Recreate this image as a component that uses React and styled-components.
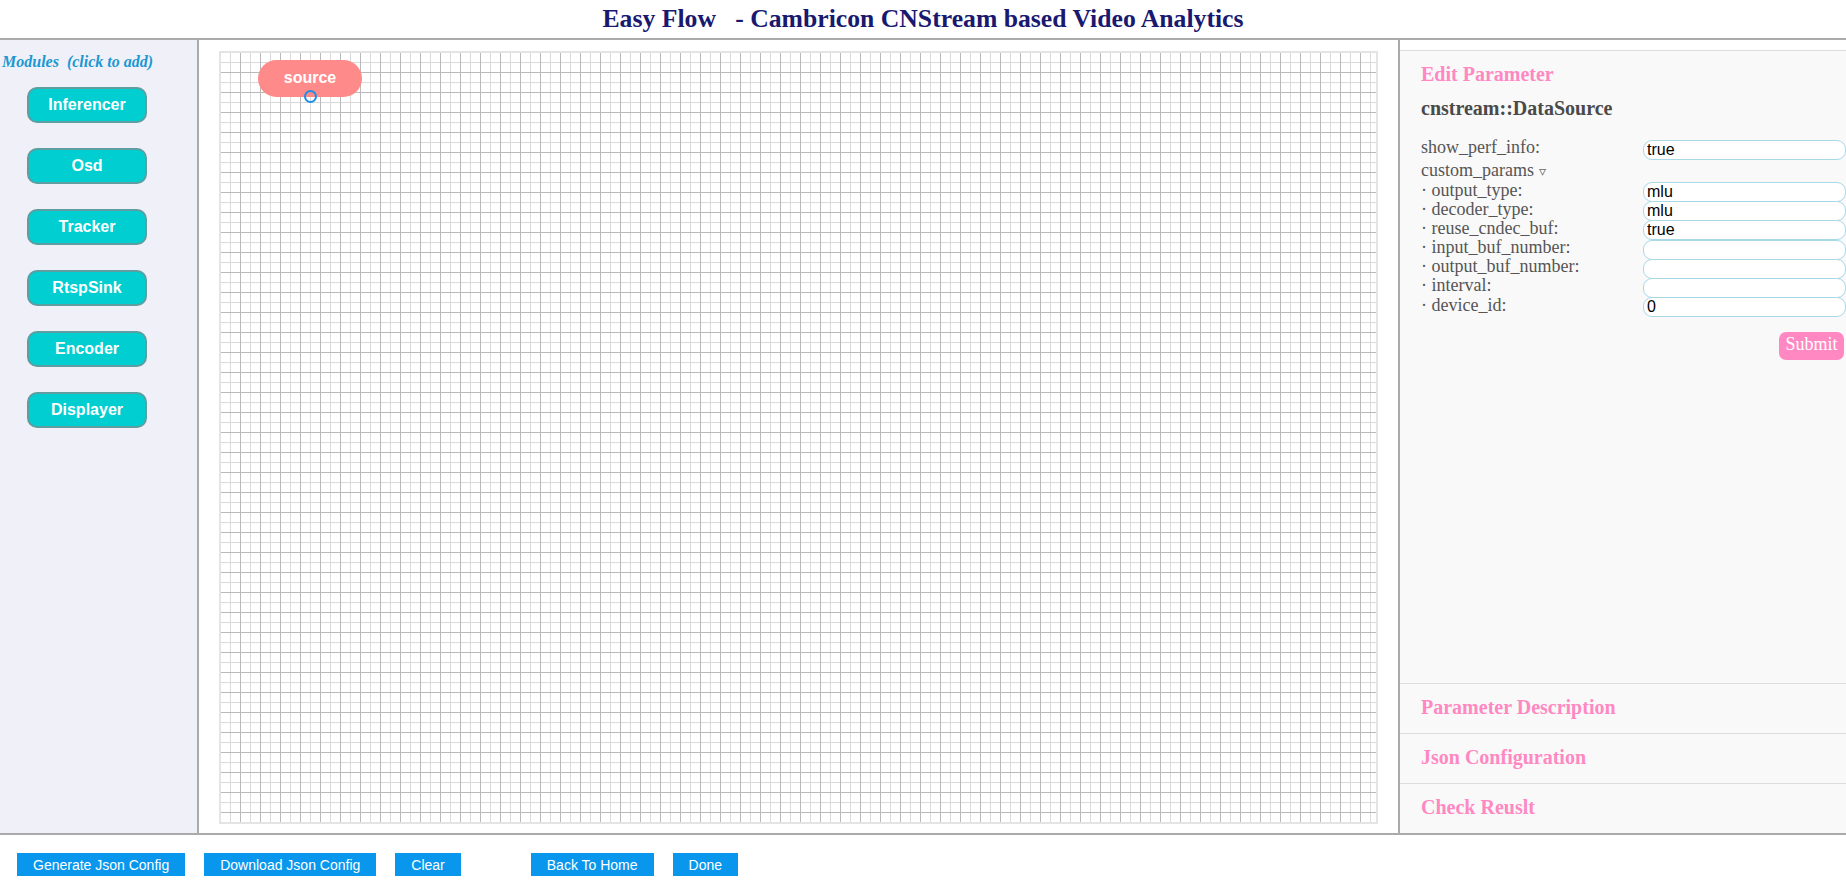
import React from "react";
import styled, { createGlobalStyle } from "styled-components";

const GlobalStyle = createGlobalStyle`
  html, body {
    margin: 0;
    padding: 0;
    overflow: hidden;
  }
  body {
    font-family: "Liberation Serif", serif;
  }
`;

const Page = styled.div`
  display: flex;
  flex-direction: column;
  width: 1846px;
  height: 889px;
  background: #fff;
`;

const Header = styled.header`
  height: 38px;
  border-bottom: 2px solid #aaa;
  display: flex;
  justify-content: center;
  align-items: center;
`;

const Title = styled.h1`
  margin: 0;
  font-family: "Liberation Serif", serif;
  font-weight: bold;
  font-size: 25.7px;
  color: #191970;
  white-space: pre;
`;

const Main = styled.div`
  flex: 1;
  display: flex;
  border-bottom: 2px solid #aaa;
  min-height: 0;
`;

const Sidebar = styled.aside`
  width: 197px;
  border-right: 2px solid #aaa;
  background: #f0f0f8;
  display: flex;
  flex-direction: column;
  padding: 12px 0 0 0;
`;

const SidebarTitle = styled.div`
  font-family: "Liberation Serif", serif;
  font-style: italic;
  font-weight: bold;
  font-size: 16px;
  line-height: 20px;
  color: #1a98d2;
  padding-left: 2px;
  white-space: pre;
  margin-bottom: 15px;
`;

const ModuleButton = styled.button`
  width: 120px;
  height: 36px;
  margin: 0 0 25px 27px;
  background: #00ced1;
  border: 2px solid #5f9ea0;
  border-radius: 10px;
  color: #fff;
  font-family: "Liberation Sans", Arial, sans-serif;
  font-weight: bold;
  font-size: 16px;
  padding: 0;
`;

const CanvasArea = styled.div`
  flex: 1;
  padding: 11px 20px 9px 20px;
  display: flex;
`;

const Canvas = styled.div`
  flex: 1;
  position: relative;
  border: 2px solid #e4e4e4;
  background-color: #fff;
  background-image:
    linear-gradient(to right, #b9b9b9 1px, transparent 1px),
    linear-gradient(to bottom, #b9b9b9 1px, transparent 1px),
    linear-gradient(to right, #dadada 1px, transparent 1px),
    linear-gradient(to bottom, #dadada 1px, transparent 1px);
  background-size: 20px 20px, 20px 20px, 10px 10px, 10px 10px;
  background-position: -1px -1px;
`;

const Node = styled.div`
  position: absolute;
  left: 37px;
  top: 7px;
  width: 104px;
  height: 37px;
  border-radius: 19px;
  background: #ff8a8a;
  color: #fff;
  font-family: "Liberation Sans", Arial, sans-serif;
  font-weight: bold;
  font-size: 16px;
  display: flex;
  align-items: center;
  justify-content: center;
  padding-bottom: 2px;
  box-sizing: border-box;
`;

const Port = styled.span`
  position: absolute;
  left: 46px;
  bottom: -6px;
  width: 9px;
  height: 9px;
  border: 2px solid #1a8fe8;
  border-radius: 50%;
  background: transparent;
`;

const Panel = styled.section`
  width: 446px;
  border-left: 2px solid #aaa;
  padding-top: 10px;
  display: flex;
  flex-direction: column;
  overflow: hidden;
`;

const PanelInner = styled.div`
  flex: 1;
  display: flex;
  flex-direction: column;
  background: #f9f9f9;
  border-top: 1px solid #ddd;
`;

const Section = styled.div`
  box-sizing: border-box;
  flex: ${(p) => (p.$open ? 1 : "none")};
  height: ${(p) => (p.$open ? "auto" : "50px")};
  border-top: ${(p) => (p.$first ? "none" : "1px solid #ddd")};
  padding: ${(p) => (p.$open ? "12px 0 0 21px" : "0 0 3px 21px")};
  display: flex;
  flex-direction: column;
  justify-content: ${(p) => (p.$open ? "flex-start" : "center")};
`;

const SectionTitle = styled.h3`
  margin: 0;
  font-family: "Liberation Serif", serif;
  font-weight: bold;
  font-size: 20px;
  line-height: 23px;
  color: #ff88c2;
`;

const ModuleName = styled.h3`
  margin: 11px 0 18px 0;
  font-family: "Liberation Serif", serif;
  font-weight: bold;
  font-size: 20px;
  line-height: 23px;
  color: #4a4a4a;
`;

const ParamRow = styled.div`
  display: flex;
  align-items: flex-start;
  height: ${(p) => p.$h || "19.2px"};
`;

const Label = styled.span`
  width: 222px;
  font-size: 18px;
  line-height: 19px;
  color: #555;
  white-space: pre;
`;

const Toggle = styled.span`
  font-size: 14px;
  color: #666;
  margin-left: 2px;
`;

const Input = styled.input`
  width: 203px;
  height: 20px;
  box-sizing: border-box;
  margin: 1.5px 0 0 0;
  padding: 0 3px;
  border: 1px solid #a9d8e6;
  border-radius: 9px;
  background: #fff;
  font-family: "Liberation Sans", Arial, sans-serif;
  font-size: 16px;
  color: #000;
  outline: none;
`;

const SubmitRow = styled.div`
  display: flex;
  justify-content: flex-end;
  padding-right: 2px;
  margin-top: 17px;
`;

const SubmitButton = styled.button`
  height: 28px;
  width: 65px;
  padding: 0 0 3px 0;
  border: none;
  border-radius: 7px;
  background: #ff88c2;
  color: #fff;
  font-family: "Liberation Serif", serif;
  font-size: 18px;
`;

const Footer = styled.footer`
  height: 54px;
  display: flex;
  align-items: flex-start;
  padding: 18px 0 0 17px;
  box-sizing: border-box;
`;

const FooterButton = styled.button`
  height: 23px;
  margin-right: ${(p) => p.$gap || 19}px;
  padding: 0 16px;
  border: none;
  background: #0897ec;
  color: #fff;
  font-family: "Liberation Sans", Arial, sans-serif;
  font-size: 14px;
  white-space: nowrap;
`;

const modules = ["Inferencer", "Osd", "Tracker", "RtspSink", "Encoder", "Displayer"];

const params = [
  ["· output_type:", "mlu"],
  ["· decoder_type:", "mlu"],
  ["· reuse_cndec_buf:", "true"],
  ["· input_buf_number:", ""],
  ["· output_buf_number:", ""],
  ["· interval:", ""],
  ["· device_id:", "0"],
];

const footerButtons = [
  { text: "Generate Json Config" },
  { text: "Download Json Config" },
  { text: "Clear", gap: 70 },
  { text: "Back To Home" },
  { text: "Done" },
];

export default function App() {
  return (
    <>
      <GlobalStyle />
      <Page>
        <Header>
          <Title>{"Easy Flow   - Cambricon CNStream based Video Analytics"}</Title>
        </Header>
        <Main>
          <Sidebar>
            <SidebarTitle>{"Modules  (click to add)"}</SidebarTitle>
            {modules.map((m) => (
              <ModuleButton key={m}>{m}</ModuleButton>
            ))}
          </Sidebar>
          <CanvasArea>
            <Canvas>
              <Node>
                source
                <Port />
              </Node>
            </Canvas>
          </CanvasArea>
          <Panel>
            <PanelInner>
              <Section $open $first>
                <SectionTitle>Edit Parameter</SectionTitle>
                <ModuleName>cnstream::DataSource</ModuleName>
                <ParamRow $h="22.5px">
                  <Label>show_perf_info:</Label>
                  <Input defaultValue="true" />
                </ParamRow>
                <ParamRow $h="20px">
                  <Label>
                    custom_params<Toggle> ▿</Toggle>
                  </Label>
                </ParamRow>
                {params.map(([label, value]) => (
                  <ParamRow key={label}>
                    <Label>{label}</Label>
                    <Input defaultValue={value} />
                  </ParamRow>
                ))}
                <SubmitRow>
                  <SubmitButton>Submit</SubmitButton>
                </SubmitRow>
              </Section>
              <Section>
                <SectionTitle>Parameter Description</SectionTitle>
              </Section>
              <Section>
                <SectionTitle>Json Configuration</SectionTitle>
              </Section>
              <Section>
                <SectionTitle>Check Reuslt</SectionTitle>
              </Section>
            </PanelInner>
          </Panel>
        </Main>
        <Footer>
          {footerButtons.map((b) => (
            <FooterButton key={b.text} $gap={b.gap}>
              {b.text}
            </FooterButton>
          ))}
        </Footer>
      </Page>
    </>
  );
}
